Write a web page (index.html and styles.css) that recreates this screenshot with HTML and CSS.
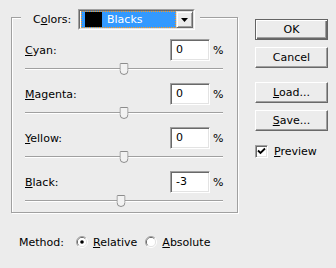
FILE: index.html
```html
<!DOCTYPE html>
<html>
<head>
<meta charset="utf-8">
<link rel="stylesheet" href="styles.css">
</head>
<body>
<div class="dialog">
  <div class="main">
    <div class="group">
      <div class="legend">
        <span class="legend-label">C<u>o</u>lors:</span>
        <div class="combo">
          <div class="combo-in">
            <div class="combo-sel"><span class="swatch"></span><span class="combo-text">Blacks</span></div>
            <div class="combo-btn"><svg width="7" height="4" viewBox="0 0 7 4"><path d="M0 0H7L3.5 4Z" fill="#000"/></svg></div>
          </div>
        </div>
      </div>

      <div class="channel">
        <div class="ch-row"><span class="ch-label"><u>C</u>yan:</span><div class="field">0</div><span class="pct">%</span></div>
        <div class="slider"><div class="track"></div><svg class="thumb" style="left:50%" width="9" height="12" viewBox="0 0 9 12"><path d="M1 0.5H8Q8.5 0.5 8.5 1V7.5Q8.5 11.5 4.5 11.5Q0.5 11.5 0.5 7.5V1Q0.5 0.5 1 0.5Z" fill="#f2f2f2" stroke="#8c8c8c"/></svg></div>
      </div>
      <div class="channel">
        <div class="ch-row"><span class="ch-label"><u>M</u>agenta:</span><div class="field">0</div><span class="pct">%</span></div>
        <div class="slider"><div class="track"></div><svg class="thumb" style="left:50%" width="9" height="12" viewBox="0 0 9 12"><path d="M1 0.5H8Q8.5 0.5 8.5 1V7.5Q8.5 11.5 4.5 11.5Q0.5 11.5 0.5 7.5V1Q0.5 0.5 1 0.5Z" fill="#f2f2f2" stroke="#8c8c8c"/></svg></div>
      </div>
      <div class="channel">
        <div class="ch-row"><span class="ch-label"><u>Y</u>ellow:</span><div class="field">0</div><span class="pct">%</span></div>
        <div class="slider"><div class="track"></div><svg class="thumb" style="left:50%" width="9" height="12" viewBox="0 0 9 12"><path d="M1 0.5H8Q8.5 0.5 8.5 1V7.5Q8.5 11.5 4.5 11.5Q0.5 11.5 0.5 7.5V1Q0.5 0.5 1 0.5Z" fill="#f2f2f2" stroke="#8c8c8c"/></svg></div>
      </div>
      <div class="channel">
        <div class="ch-row"><span class="ch-label"><u>B</u>lack:</span><div class="field">-3</div><span class="pct">%</span></div>
        <div class="slider"><div class="track"></div><svg class="thumb" style="left:48.5%" width="9" height="12" viewBox="0 0 9 12"><path d="M1 0.5H8Q8.5 0.5 8.5 1V7.5Q8.5 11.5 4.5 11.5Q0.5 11.5 0.5 7.5V1Q0.5 0.5 1 0.5Z" fill="#f2f2f2" stroke="#8c8c8c"/></svg></div>
      </div>
    </div>

    <div class="method">
      <span>Method:</span>
      <svg class="radio" width="12" height="12" viewBox="0 0 12 12">
        <path d="M2.1 9.9A5.5 5.5 0 0 1 9.9 2.1" fill="none" stroke="#a0a0a0"/>
        <path d="M9.9 2.1A5.5 5.5 0 0 1 2.1 9.9" fill="none" stroke="#ffffff"/>
        <path d="M2.8 9.2A4.5 4.5 0 0 1 9.2 2.8" fill="none" stroke="#696969"/>
        <path d="M9.2 2.8A4.5 4.5 0 0 1 2.8 9.2" fill="none" stroke="#e3e3e3"/>
        <circle cx="6" cy="6" r="4" fill="#fff"/>
        <circle cx="6" cy="6" r="1.8" fill="#000"/>
      </svg>
      <span class="radio-label"><u>R</u>elative</span>
      <svg class="radio second" width="12" height="12" viewBox="0 0 12 12">
        <path d="M2.1 9.9A5.5 5.5 0 0 1 9.9 2.1" fill="none" stroke="#a0a0a0"/>
        <path d="M9.9 2.1A5.5 5.5 0 0 1 2.1 9.9" fill="none" stroke="#ffffff"/>
        <path d="M2.8 9.2A4.5 4.5 0 0 1 9.2 2.8" fill="none" stroke="#696969"/>
        <path d="M9.2 2.8A4.5 4.5 0 0 1 2.8 9.2" fill="none" stroke="#e3e3e3"/>
        <circle cx="6" cy="6" r="4" fill="#fff"/>
      </svg>
      <span class="radio-label"><u>A</u>bsolute</span>
    </div>
  </div>

  <div class="side">
    <div class="btn default">OK</div>
    <div class="btn gap-s">Cancel</div>
    <div class="btn gap-l"><u>L</u>oad...</div>
    <div class="btn gap-s"><u>S</u>ave...</div>
    <div class="check-row">
      <span class="checkbox"><svg width="9" height="9" viewBox="0 0 9 9"><path d="M1 3.5L3.5 6L8 1.5" fill="none" stroke="#000" stroke-width="1.8"/></svg></span>
      <span class="check-label"><u>P</u>review</span>
    </div>
  </div>
</div>
</body>
</html>
```

FILE: styles.css
```css
* {
  box-sizing: border-box;
}

body {
  margin: 0;
  width: 336px;
  height: 268px;
  overflow: hidden;
  background: #ececec;
  font-family: "DejaVu Sans", sans-serif;
  font-size: 11px;
  color: #000;
}

u {
  text-decoration: underline;
  text-underline-offset: 1px;
}

.dialog {
  display: flex;
}

.main {
  padding: 17px 0 0 11px;
  width: 238px;
}

.group {
  position: relative;
  width: 227px;
  height: 196px;
  border: 1px solid #a0a0a0;
  box-shadow: inset 1px 1px #fff, 1px 1px #fff;
  padding: 21px 14px 0 13px;
}

.legend {
  position: absolute;
  top: -9px;
  left: 9px;
  width: 179px;
  height: 21px;
  padding: 0 5px 0 12px;
  display: flex;
  align-items: center;
  background: #ececec;
}

.combo {
  margin-left: auto;
  width: 117px;
  height: 21px;
  border: 1px solid;
  border-color: #a0a0a0 #fff #fff #a0a0a0;
}

.combo-in {
  height: 100%;
  border: 1px solid;
  border-color: #696969 #e3e3e3 #e3e3e3 #696969;
  background: #fff;
  display: flex;
}

.combo-sel {
  flex: 1;
  margin-left: 1px;
  background: #3399ff;
  border: 1px dotted #ff9a1e;
  padding-left: 3px;
  display: flex;
  align-items: center;
}

.swatch {
  width: 17px;
  height: 15px;
  background: #000;
}

.combo-text {
  margin-left: 5px;
  color: #fff;
}

.combo-btn {
  width: 17px;
  height: 17px;
  background: #ececec;
  border: 1px solid;
  border-color: #e3e3e3 #696969 #696969 #e3e3e3;
  box-shadow: inset 1px 1px #fff, inset -1px -1px #a0a0a0;
  display: flex;
  align-items: center;
  justify-content: center;
}

.channel {
  height: 44px;
}

.ch-row {
  display: flex;
  align-items: center;
  height: 22px;
}

.ch-label {
  flex: 1;
}

.field {
  width: 40px;
  height: 22px;
  border: 1px solid;
  border-color: #a0a0a0 #fff #fff #a0a0a0;
  box-shadow: inset 1px 1px #696969, inset -1px -1px #e3e3e3;
  background: #fff;
  padding-left: 5px;
  line-height: 20px;
}

.pct {
  width: 10px;
  margin-left: 3px;
}

.slider {
  position: relative;
  height: 22px;
  padding-top: 7px;
}

.track {
  height: 2px;
  border-top: 1px solid #a0a0a0;
  border-bottom: 1px solid #fff;
}

.thumb {
  position: absolute;
  top: 2px;
  transform: translateX(-50%);
  display: block;
}

.method {
  display: flex;
  align-items: center;
  height: 16px;
  margin-top: 21px;
  padding-left: 8px;
}

.radio {
  margin-left: 12px;
  display: block;
}

.radio.second {
  margin-left: 8px;
}

.radio-label {
  margin-left: 5px;
}

.side {
  margin-left: 17px;
  padding-top: 19px;
  width: 73px;
  display: flex;
  flex-direction: column;
}

.btn {
  width: 73px;
  height: 21px;
  display: flex;
  align-items: center;
  justify-content: center;
  background: #ececec;
  border: 1px solid;
  border-color: #fff #696969 #696969 #fff;
  box-shadow: inset -1px -1px #a0a0a0;
}

.btn.default {
  border: 1px solid #646464;
  box-shadow: inset 1px 1px #fff, inset -1px -1px #696969, inset -2px -2px #a0a0a0;
}

.gap-s {
  margin-top: 7px;
}

.gap-l {
  margin-top: 14px;
}

.check-row {
  margin-top: 14px;
  display: flex;
  align-items: center;
}

.checkbox {
  width: 13px;
  height: 13px;
  border: 1px solid;
  border-color: #a0a0a0 #fff #fff #a0a0a0;
  box-shadow: inset 1px 1px #696969, inset -1px -1px #e3e3e3;
  background: #fff;
  display: flex;
  align-items: center;
  justify-content: center;
}

.check-label {
  margin-left: 6px;
}
```
